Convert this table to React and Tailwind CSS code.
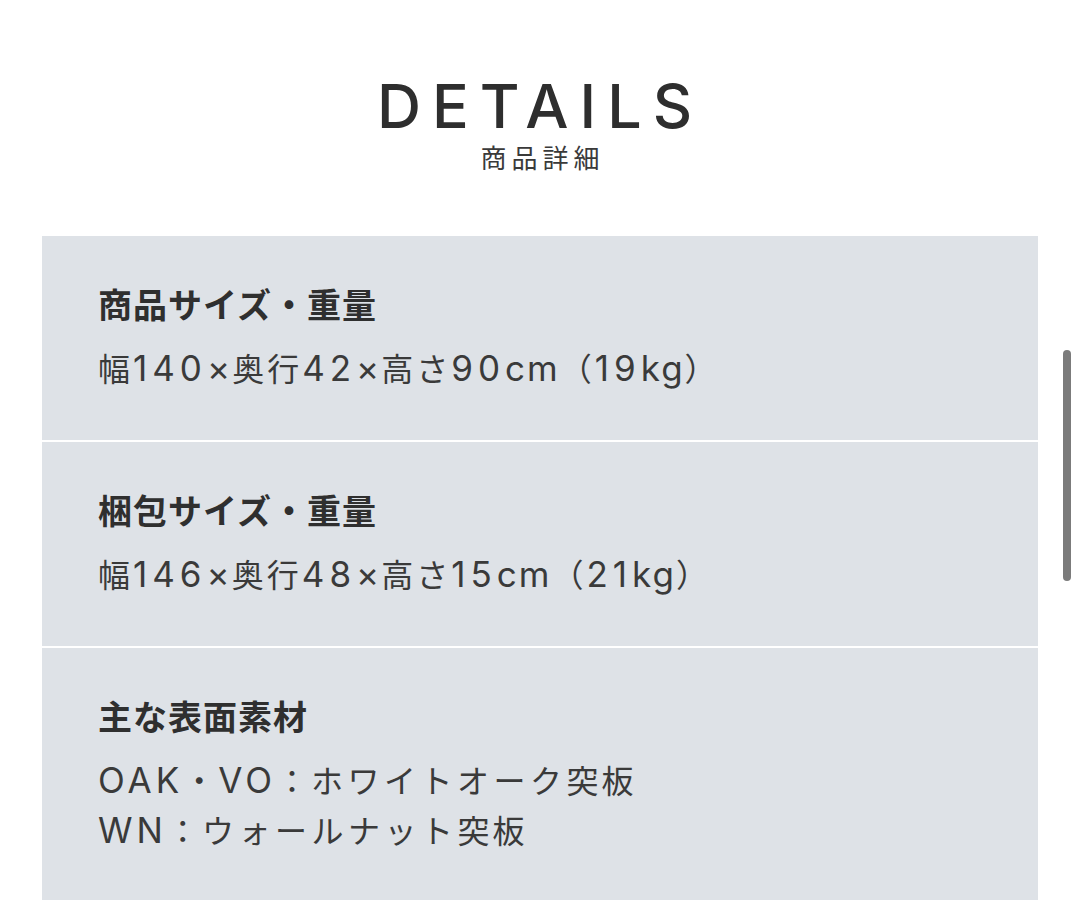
import React from "react";

const jp = { fontFamily: '"Noto Sans CJK JP", "Noto Sans", sans-serif' };
const latin = { fontFamily: 'Inter, "Liberation Sans", Arial, sans-serif' };

const rows = [
  { title: "商品サイズ・重量", lines: ["幅140×奥行42×高さ90cm（19kg）"] },
  { title: "梱包サイズ・重量", lines: ["幅146×奥行48×高さ15cm（21kg）"] },
  {
    title: "主な表面素材",
    lines: ["OAK・VO：ホワイトオーク突板", "WN：ウォールナット突板"],
  },
];

// latin runs get a bigger, wider face like the original's Hiragino glyphs
const MixedText = ({ text }) => {
  const parts = text
    .split(/([0-9]+|[A-Z]+|[a-z×]+|[ァ-ヶー]+)/)
    .filter(Boolean);
  return parts.map((p, i) => {
    if (/^[0-9]+$/.test(p)) {
      return (
        <span key={i} className="text-[35px] tracking-[5px]" style={latin}>
          {p}
        </span>
      );
    }
    if (/^[A-Z]+$/.test(p)) {
      return (
        <span key={i} className="text-[35px] tracking-[4px]" style={latin}>
          {p}
        </span>
      );
    }
    if (/^[a-z×]+$/.test(p)) {
      return (
        <span key={i} className="text-[35px] tracking-[2px]" style={latin}>
          {p}
        </span>
      );
    }
    if (/^[ァ-ヶー]+$/.test(p)) {
      return (
        <span key={i} className="tracking-[4.5px]">
          {p}
        </span>
      );
    }
    return <span key={i}>{p}</span>;
  });
};

const DetailRow = ({ title, lines }) => (
  <div className="bg-[#dee2e7] pl-[56px] pr-6 pt-[43px] pb-[48px]">
    <h3 className="text-[34px] leading-[50px] font-bold tracking-[1px] text-[#2f2f2f]">
      {title}
    </h3>
    <div className="mt-[13px]">
      {lines.map((line) => (
        <p
          key={line}
          className="h-[50px] text-[32px] leading-[50px] tracking-[3px] text-[#3a3a3a] whitespace-nowrap"
        >
          <MixedText text={line} />
        </p>
      ))}
    </div>
  </div>
);

const App = () => {
  return (
    <div className="relative min-h-[900px] bg-white" style={jp}>
      <header className="pt-[76px] flex flex-col items-center">
        <h1
          className="text-[61px] leading-none font-medium tracking-[11px] text-[#2e2e2e]"
          style={latin}
        >
          DETAILS
        </h1>
        <p className="mt-[7px] text-[26px] leading-none tracking-[5px] pl-[5px] text-[#3a3a3a]">
          商品詳細
        </p>
      </header>

      <section className="mt-[66px] ml-[42px] w-[996px] flex flex-col gap-[2px]">
        {rows.map((r) => (
          <DetailRow key={r.title} title={r.title} lines={r.lines} />
        ))}
      </section>

      {/* overlay scrollbar */}
      <div className="absolute left-[1063px] top-[350px] w-[8px] h-[231px] rounded-full bg-[#7b7b7b]" />
    </div>
  );
};

export default App;
